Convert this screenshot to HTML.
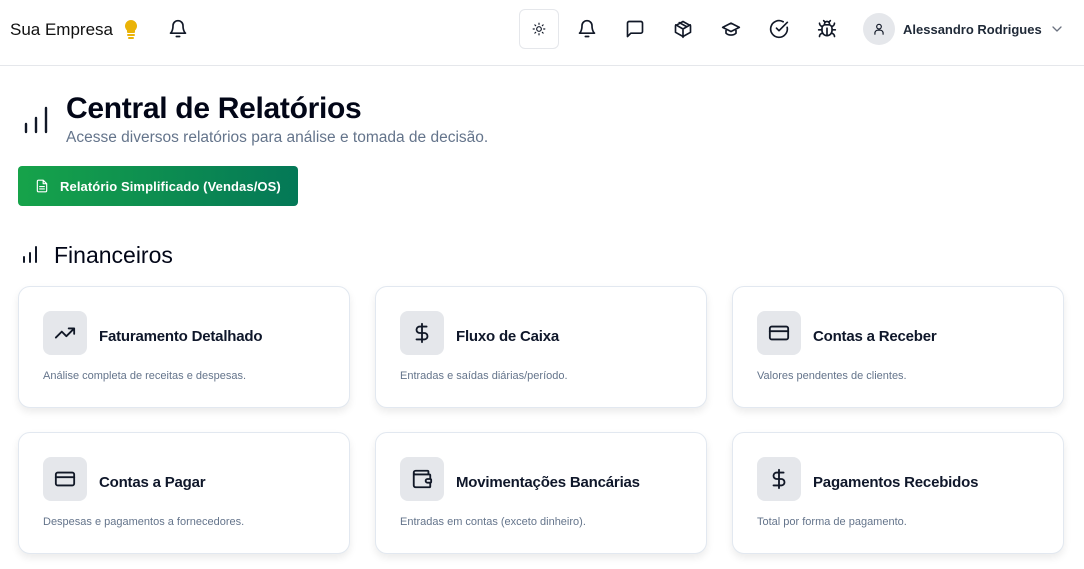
<!DOCTYPE html>
<html><head><meta charset="utf-8"><style>
*{box-sizing:border-box;margin:0;padding:0}
body{width:1084px;height:569px;overflow:hidden;background:#fff;font-family:"Liberation Sans",sans-serif;color:#0f172a;position:relative}
.hdr{position:absolute;left:0;top:0;width:1084px;height:66px;border-bottom:1px solid #e5e7eb}
.abs{position:absolute}
svg{fill:none;stroke:#111827;stroke-width:2;stroke-linecap:round;stroke-linejoin:round}
.card{position:absolute;width:332px;height:122px;border:1px solid #e2e8f0;border-radius:12px;background:#fff;box-shadow:0 4px 8px rgba(0,0,0,.08)}
.ib{position:absolute;left:24px;top:24px;width:44px;height:44px;border-radius:8px;background:#e5e7eb;display:flex;align-items:center;justify-content:center}
.ct{position:absolute;left:80px;top:41px;font-size:15px;font-weight:bold;color:#0f172a;letter-spacing:-.2px}
.cd{position:absolute;left:24px;top:83px;font-size:11px;color:#64748b}
</style></head><body>
<div class="hdr">
 <div class="abs" style="left:10px;top:20px;font-size:17px;color:#111">Sua Empresa</div>
 <svg class="abs" style="left:122px;top:19px" width="18" height="22" viewBox="0 0 18 22"><path d="M9 2a5 5 0 0 0-3 9v2h6v-2a5 5 0 0 0-3-9z" fill="#eab308" stroke="#eab308"/><path d="M6 16h6M7 19h4" stroke="#eab308"/></svg>
 <svg class="abs" style="left:168px;top:19px" width="20" height="20" viewBox="0 0 24 24"><path d="M6 8a6 6 0 0 1 12 0c0 7 3 9 3 9H3s3-2 3-9M10 21h4"/></svg>
 <div class="abs" style="left:519px;top:9px;width:40px;height:40px;border:1px solid #e5e7eb;border-radius:6px"></div>
 <svg class="abs" style="left:532px;top:22px" width="14" height="14" viewBox="0 0 24 24"><circle cx="12" cy="12" r="4"/><path d="M12 2v2M12 20v2M4.9 4.9l1.4 1.4M17.7 17.7l1.4 1.4M2 12h2M20 12h2M4.9 19.1l1.4-1.4M17.7 6.3l1.4-1.4"/></svg>
 <svg class="abs" style="left:577px;top:19px" width="20" height="20" viewBox="0 0 24 24"><path d="M6 8a6 6 0 0 1 12 0c0 7 3 9 3 9H3s3-2 3-9M10 21h4"/></svg>
 <svg class="abs" style="left:625px;top:19px" width="20" height="20" viewBox="0 0 24 24"><path d="M21 15a2 2 0 0 1-2 2H7l-4 4V5a2 2 0 0 1 2-2h14a2 2 0 0 1 2 2z"/></svg>
 <svg class="abs" style="left:673px;top:19px" width="20" height="20" viewBox="0 0 24 24"><path d="M21 16V8l-9-5-9 5v8l9 5 9-5zM3.3 7L12 12l8.7-5M12 22V12M7.5 4.3l9 5"/></svg>
 <svg class="abs" style="left:721px;top:19px" width="20" height="20" viewBox="0 0 24 24"><path d="M22 10L12 5 2 10l10 5 10-5zM6 12v5c3 3 9 3 12 0v-5"/></svg>
 <svg class="abs" style="left:769px;top:19px" width="20" height="20" viewBox="0 0 24 24"><path d="M21.8 10A10 10 0 1 1 17 3.3M9 11l3 3L22 4"/></svg>
 <svg class="abs" style="left:817px;top:19px" width="20" height="20" viewBox="0 0 24 24"><path d="M8 2l1.9 1.9M16 2l-1.9 1.9M9 7.1V6a3 3 0 0 1 6 0v1.1M12 20c-3.3 0-6-2.7-6-6v-3a4 4 0 0 1 4-4h4a4 4 0 0 1 4 4v3c0 3.3-2.7 6-6 6zM12 20v-9M6.5 9C4.6 8.8 3 7.1 3 5M6 13H2M3 21c0-2.1 1.7-3.9 3.8-4M20.97 5c0 2.1-1.6 3.8-3.5 4M22 13h-4M17.2 17c2.1.1 3.8 1.9 3.8 4"/></svg>
 <div class="abs" style="left:863px;top:13px;width:32px;height:32px;border-radius:50%;background:#e5e7eb"></div>
 <svg class="abs" style="left:872px;top:22px" width="14" height="14" viewBox="0 0 24 24"><circle cx="12" cy="8" r="4"/><path d="M5 21v-2a5 5 0 0 1 5-5h4a5 5 0 0 1 5 5v2"/></svg>
 <div class="abs" style="left:903px;top:22px;font-size:13px;font-weight:bold;color:#1f2937">Alessandro Rodrigues</div>
 <svg class="abs" style="left:1052px;top:25px;stroke:#6b7280" width="10" height="8" viewBox="0 0 10 8"><path d="M1 2l4 4 4-4" stroke-width="1.3"/></svg>
</div>
<svg class="abs" style="left:24px;top:106px" width="24" height="28" viewBox="0 0 24 28"><path d="M2 18v8M12 12v14M22 2v24" stroke-width="2.4"/></svg>
<div class="abs" style="left:66px;top:92px;font-size:30px;font-weight:bold;color:#020617;letter-spacing:-.3px">Central de Relatórios</div>
<div class="abs" style="left:66px;top:129px;font-size:15.5px;color:#64748b">Acesse diversos relatórios para análise e tomada de decisão.</div>
<div class="abs" style="left:18px;top:166px;width:280px;height:40px;border-radius:4px;background:linear-gradient(90deg,#16a34a,#047857)"></div>
<svg class="abs" style="left:35px;top:178px;stroke:#fff" width="14" height="16" viewBox="0 0 24 24"><path d="M14 2H6a2 2 0 0 0-2 2v16a2 2 0 0 0 2 2h12a2 2 0 0 0 2-2V8zM14 2v6h6M8 13h8M8 17h8"/></svg>
<div class="abs" style="left:60px;top:179px;font-size:13px;font-weight:bold;color:#fff;letter-spacing:.1px">Relatório Simplificado (Vendas/OS)</div>
<svg class="abs" style="left:22px;top:246px" width="16" height="18" viewBox="0 0 16 18"><path d="M2 11v5M8 7v9M14 1v15" stroke-width="2"/></svg>
<div class="abs" style="left:54px;top:242px;font-size:23px;color:#020617">Financeiros</div>

<div class="card" style="left:18px;top:286px"><div class="ib"><svg width="22" height="22" viewBox="0 0 24 24"><path d="M22 7l-8.5 8.5-5-5L2 17M16 7h6v6"/></svg></div><div class="ct">Faturamento Detalhado</div><div class="cd">Análise completa de receitas e despesas.</div></div>
<div class="card" style="left:375px;top:286px"><div class="ib"><svg width="22" height="24" viewBox="0 0 24 24"><path d="M12 2v20M17 5H9.5a3.5 3.5 0 0 0 0 7h5a3.5 3.5 0 0 1 0 7H6"/></svg></div><div class="ct">Fluxo de Caixa</div><div class="cd">Entradas e saídas diárias/período.</div></div>
<div class="card" style="left:732px;top:286px"><div class="ib"><svg width="22" height="22" viewBox="0 0 24 24"><rect x="2" y="5" width="20" height="14" rx="2"/><path d="M2 10h20"/></svg></div><div class="ct">Contas a Receber</div><div class="cd">Valores pendentes de clientes.</div></div>
<div class="card" style="left:18px;top:432px"><div class="ib"><svg width="22" height="22" viewBox="0 0 24 24"><rect x="2" y="5" width="20" height="14" rx="2"/><path d="M2 10h20"/></svg></div><div class="ct">Contas a Pagar</div><div class="cd">Despesas e pagamentos a fornecedores.</div></div>
<div class="card" style="left:375px;top:432px"><div class="ib"><svg width="22" height="22" viewBox="0 0 24 24"><path d="M19 7V4a1 1 0 0 0-1-1H5a2 2 0 0 0 0 4h15a1 1 0 0 1 1 1v4h-3a2 2 0 0 0 0 4h3a1 1 0 0 0 1-1v-2a1 1 0 0 0-1-1M3 5v14a2 2 0 0 0 2 2h15a1 1 0 0 0 1-1v-4"/></svg></div><div class="ct">Movimentações Bancárias</div><div class="cd">Entradas em contas (exceto dinheiro).</div></div>
<div class="card" style="left:732px;top:432px"><div class="ib"><svg width="22" height="24" viewBox="0 0 24 24"><path d="M12 2v20M17 5H9.5a3.5 3.5 0 0 0 0 7h5a3.5 3.5 0 0 1 0 7H6"/></svg></div><div class="ct">Pagamentos Recebidos</div><div class="cd">Total por forma de pagamento.</div></div>
</body></html>
